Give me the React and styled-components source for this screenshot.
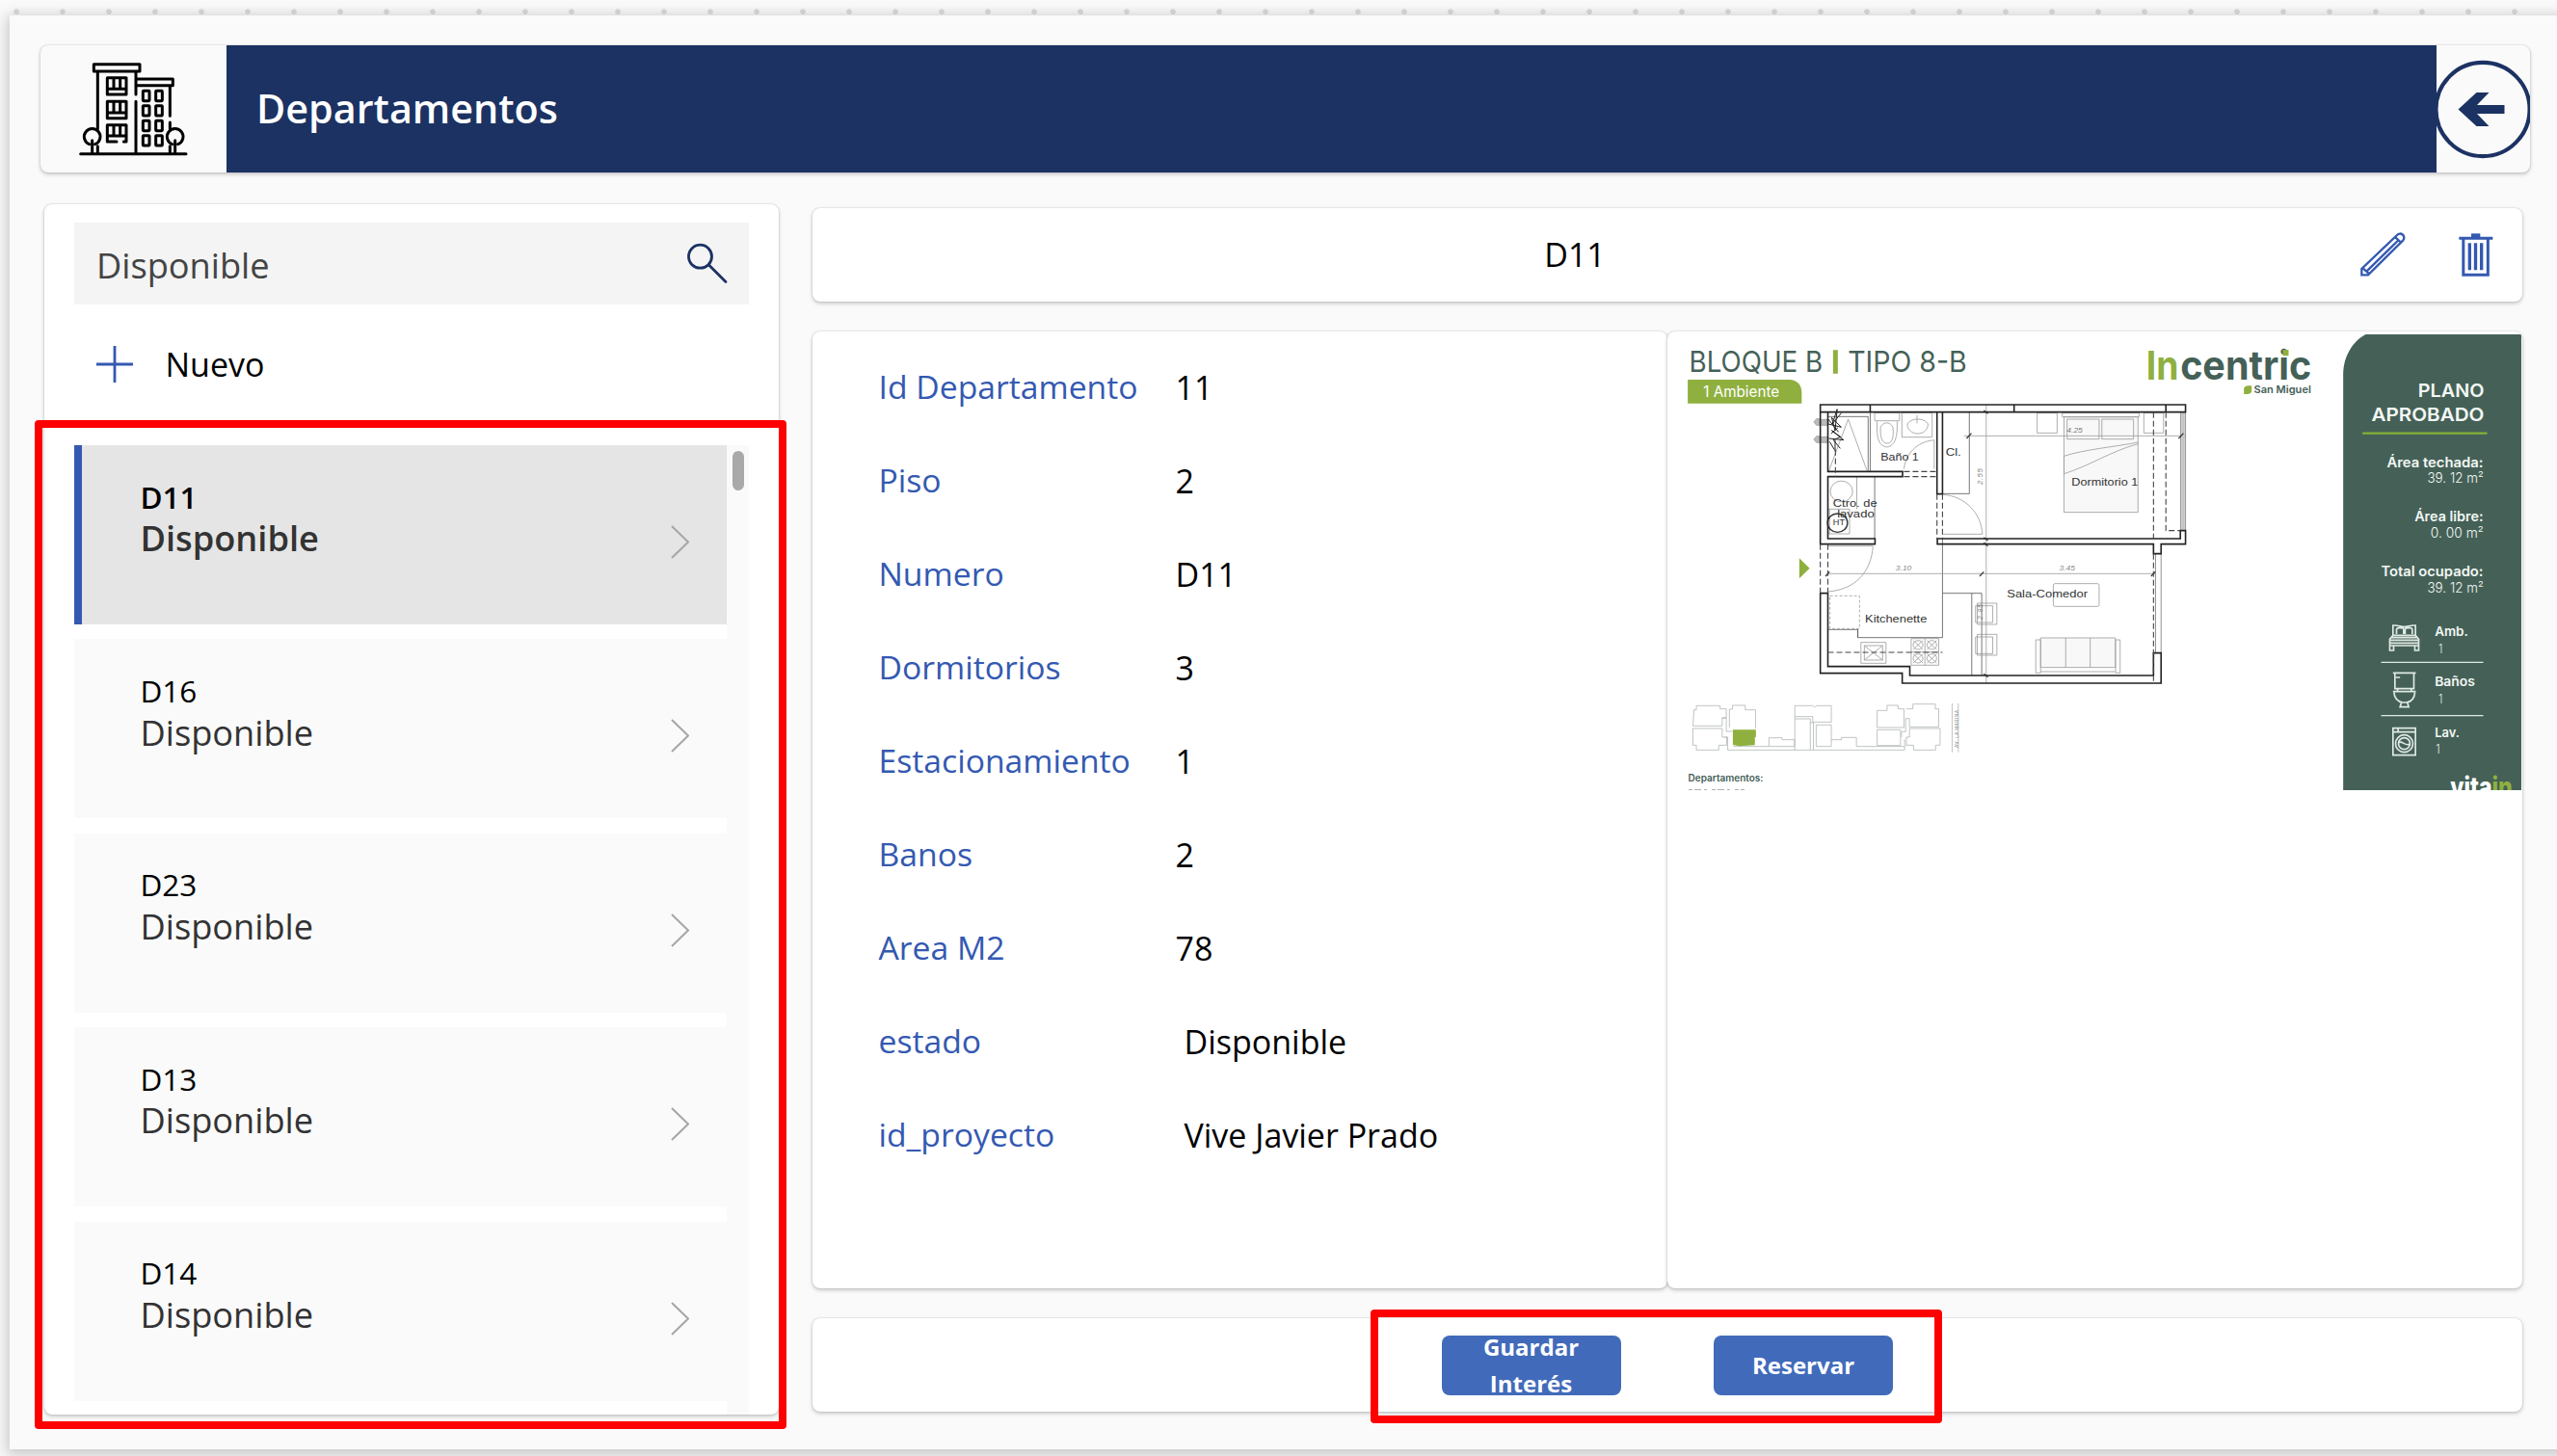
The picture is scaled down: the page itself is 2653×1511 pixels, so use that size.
import React from "react";
import styled, { createGlobalStyle, css } from "styled-components";

const GlobalStyle = createGlobalStyle`
  *, *::before, *::after { box-sizing: border-box; }
  body { margin: 0; background: #fafafa; overflow: hidden; }
`;

const navy = "#1c3263";
const blue = "#3459b1";
const deepGreen = "#456157";
const lime = "#8fb03e";

const Page = styled.div`
  width: 2653px;
  height: 1511px;
  overflow: hidden;
  position: relative;
  padding: 16px 0 0 10px;
  font-family: "Open Sans", "Noto Sans", sans-serif;
  font-size: 34px;
  color: #000;
  background: #fafafa radial-gradient(circle at 17px 12px, #dcdcdc 2.4px, transparent 3.2px) 0 0 / 48px 48px;
`;

const Canvas = styled.main`
  width: 2660px;
  height: 1488px;
  padding: 31px 0 0 32px;
  background: #fafafa;
  box-shadow: 0 3px 14px 3px rgba(0, 0, 0, 0.2);
`;

const card = css`
  background: #fff;
  border-radius: 8px;
  box-shadow: 0 0 2px rgba(0, 0, 0, 0.2), 0 2px 4px rgba(0, 0, 0, 0.2);
`;

const Header = styled.header`
  ${card}
  background: #fafafa;
  display: flex;
  width: 2582.5px;
  height: 132px;
  overflow: hidden;
`;

const LogoBox = styled.div`
  width: 193px;
  padding: 8px 0 0 28px;
`;

const TitleBar = styled.h1`
  flex: 1;
  margin: 0;
  padding-left: 31px;
  background: ${navy};
  color: #fff;
  font-size: 41.3px;
  font-weight: 600;
  line-height: 131px;
`;

const BackButton = styled.button`
  width: 97px;
  padding: 0;
  border: 0;
  background: none;
  display: flex;
  align-items: center;
  justify-content: center;
  overflow: hidden;
  svg { flex: none; }
`;

const Body = styled.div`
  display: flex;
  align-items: flex-start;
  gap: 35px;
  padding: 33px 0 0 4px;
`;

const Sidebar = styled.aside`
  ${card}
  width: 762px;
  height: 1256px;
  padding: 19px 31px 0 30.5px;
  display: flex;
  flex-direction: column;
`;

const SearchField = styled.div`
  height: 85px;
  padding: 2px 22px 0 23.5px;
  display: flex;
  align-items: center;
  justify-content: space-between;
  background: #f4f4f4;
  color: #444;
  font-size: 36.2px;
  svg { margin-bottom: 3px; }
`;

const NewButton = styled.div`
  height: 146px;
  padding: 0 0 22px 23px;
  display: flex;
  align-items: center;
  gap: 34px;
`;

const Gallery = styled.div`
  flex: 1;
  display: flex;
  justify-content: space-between;
  background: #fafafa;
`;

const Items = styled.ul`
  width: 677.5px;
  height: 1006px;
  margin: 0;
  padding: 0;
  list-style: none;
  display: flex;
  flex-direction: column;
  gap: 15.4px;
  background: #fff;
`;

const Item = styled.li`
  height: 186px;
  padding: 31.5px 39.5px 0 ${(p) => (p.$selected ? 61 : 69)}px;
  display: flex;
  justify-content: space-between;
  background: ${(p) => (p.$selected ? "#e5e5e5" : "#fafafa")};
  border-left: ${(p) => (p.$selected ? `8px solid ${blue}` : "0")};
  font-weight: ${(p) => (p.$selected ? 600 : 400)};
  line-height: 43.7px;
  svg { margin-top: 51.5px; }
`;

const ItemTitle = styled.div`
  font-size: 31.5px;
`;

const ItemState = styled.div`
  font-size: 36.2px;
  color: #333;
`;

const ScrollTrack = styled.div`
  width: 23px;
  padding: 5.5px 0 0 6px;
`;

const ScrollThumb = styled.div`
  width: 11.5px;
  height: 41px;
  border-radius: 6px;
  background: #a9a9a9;
`;

const Detail = styled.section`
  width: 1774px;
  padding-top: 4px;
  display: flex;
  flex-direction: column;
`;

const DetailHeader = styled.div`
  ${card}
  height: 97px;
  padding-right: 30px;
  display: flex;
  align-items: center;
`;

const DetailTitle = styled.div`
  flex: 1;
  padding: 0 24px 1px 0;
  text-align: center;
`;

const Actions = styled.div`
  display: flex;
  gap: 55px;
  padding-bottom: 1px;
`;

const DetailBody = styled.div`
  display: flex;
  margin: 31px 0;
`;

const FormCard = styled.div`
  ${card}
  width: 887px;
  height: 993px;
  padding: 9px 0 0 68.5px;
`;

const PictureCard = styled(FormCard)`
  padding: 3px 0 0;
  overflow: hidden;
`;

const Field = styled.div`
  height: 97px;
  display: flex;
  line-height: 97px;
`;

const FieldLabel = styled.div`
  width: ${(p) => (p.$indent ? 317 : 308)}px;
  color: ${blue};
  font-size: 33.7px;
`;

const FieldValue = styled.div`
  padding-top: 0.5px;
`;

const Footer = styled.div`
  ${card}
  height: 97px;
  padding: 17.5px 0 0 652.5px;
  display: flex;
  gap: 96.5px;
`;

const ActionButton = styled.button`
  width: 186px;
  height: 62px;
  padding: 1px 20px 0;
  border: 0;
  border-radius: 8px;
  overflow: hidden;
  display: flex;
  align-items: center;
  justify-content: center;
  background: #416bba;
  color: #fff;
  font: 700 24px/37.7px "Open Sans", sans-serif;
`;

const Highlight = styled.div`
  position: absolute;
  border: 8px solid #f00;
  border-radius: 4px;
  left: ${(p) => p.$x}px;
  top: ${(p) => p.$y}px;
  width: ${(p) => p.$w}px;
  height: ${(p) => p.$h}px;
`;

const BuildingIcon = () => {
  const flat = [[235, 118], [275, 118], [235, 164], [275, 164], [235, 211], [275, 211], [235, 257], [275, 257]];
  return (
    <svg width="135" height="115" viewBox="0 0 405 345" fill="none" stroke="#000" strokeWidth="9" strokeLinecap="round" strokeLinejoin="round">
      <path d="M41 314H369M94 58V236M94 290V312M213 151V312M213 58V129M319 104V196M319 216V236M319 290V312" />
      <rect x="82" y="35" width="143" height="22" />
      <path d="M217 81H328V101H217" />
      {[77, 151].map((y) => (
        <path key={y} d={`M124 ${y}H183V${y + 52}H124ZM124 ${y + 35}H183M144 ${y}V${y + 33}M164 ${y}V${y + 33}`} />
      ))}
      <path d="M153 276H124V224H183V276H175M124 258H183M144 224V257M164 224V257" />
      {flat.map(([x, y]) => (
        <rect key={`${x}-${y}`} x={x} y={y} width="20" height="31" rx="2" />
      ))}
      <path d="M68 284A25 25 0 1 1 86 284M326 284A25 25 0 1 1 344 284M77 272V312M335 272V312" />
    </svg>
  );
};

const BackIcon = () => (
  <svg width="103" height="103" viewBox="0 0 103 103">
    <circle cx="51" cy="51.5" r="48.6" fill="none" stroke={navy} strokeWidth="4.2" />
    <path fill={navy} d="M25.500 51.5L44.500 34H57.500L45 47H73.500V56H45L57.500 69H44.500Z" />
  </svg>
);

const SearchIcon = () => (
  <svg width="44" height="44" viewBox="0 0 44 44" fill="none" stroke={navy} strokeWidth="2.8" strokeLinecap="round">
    <circle cx="15.5" cy="15.2" r="12" />
    <path d="M24.5 24L42 41.5" />
  </svg>
);

const PlusIcon = () => (
  <svg width="38" height="38" viewBox="0 0 38 38" stroke={blue} strokeWidth="2.8">
    <path d="M0 19H38M19 0V38" />
  </svg>
);

const Chevron = () => (
  <svg width="19" height="35" viewBox="0 0 19 35" fill="none" stroke="#a6a6a6" strokeWidth="2">
    <path d="M1 1L18 17.5L1 34" />
  </svg>
);

const PencilIcon = () => (
  <svg width="47" height="46" viewBox="0 0 141 138" fill="none" stroke={blue} strokeWidth="7">
    <path d="M4 133V114L114 9A11.5 11.5 0 0 1 133 25L24 133ZM20 121L116 27M8 112L28 130M107 14L127 33" />
  </svg>
);

const TrashIcon = () => (
  <svg width="36" height="46" viewBox="0 0 108 138" fill="none" stroke={blue}>
    <path strokeWidth="9" d="M1 19H106M14.5 19V132.500H91V19" />
    <path strokeWidth="10" d="M34 34V118M52.500 34V118M71 34V118" />
    <path fill={blue} stroke="none" d="M39 4H67V17H39Z" />
  </svg>
);

/* Plan coordinates are 2.8 units per pixel across and 3 units per pixel down. */
const PlanText = ({ x, y, w, size, children, ...rest }) => (
  <text
    x={x / 2.8 - 1}
    y={y / 3 - 7}
    textLength={w / 2.8}
    lengthAdjust="spacingAndGlyphs"
    fontSize={size}
    fill="#333"
    fontFamily="Liberation Sans, Arial, sans-serif"
    {...rest}
  >
    {children}
  </text>
);

const PanelText = ({ x, y, w, size, weight = 600, fill = "#f2f7f4", children }) => (
  <text x={x} y={y} textLength={w} lengthAdjust="spacingAndGlyphs" fontSize={size} fontWeight={weight} fill={fill}>
    {children}
  </text>
);

const Walls = () => (
  <g stroke="#222" strokeWidth="1.6">
    <path d="M447 240H1508V263H447ZM592 240V263M1010 240V263M1451 240V263" />
    <path d="M447 263V674H606V657H469V464H686V448H469V263" />
    <path d="M786 263V518H802V263" />
    <path d="M1493 632H1508V674H1437V704H1415V674H787V657H1493Z" />
    <path d="M469 827H447V1076H685V1107H1437V1013H1415V1083H707V1055H469Z" />
    <path strokeDasharray="6 3" strokeWidth="1.1" stroke="#444" d="M447 674V827M469 674V827M690 448H786M690 464H786M786 518V657M802 518V657M1415 263V657M1451 263V632H1493M469 1011H802M1415 704V1107M491 380V464" />
  </g>
);

const Furniture = () => (
  <g stroke="#999" strokeWidth="0.8">
    <path fill="#f8f8f8" stroke="none" d="M1155 278H1370V575H1155ZM1087 966H1304V1058H1087Z" />
    <path stroke="#555" d="M586 277V446M592 263V448M469 277H586M802 517H880V263M605 464V657M802 657V965H556V940H469M802 827H916V1083M887 827V1083M556 940V965" />
    <path d="M472 446L528 285L583 446M864 337H1508M929 240V1107M469 766H1420" />
    <path d="M605 265H677V290H605ZM612 292C610 340 615 368 640 372C665 368 672 340 670 292M622 310C620 350 630 360 641 360C652 360 662 350 658 310C650 292 630 292 622 310ZM684 265H772V341H684ZM700 300C700 340 760 340 760 300C750 280 710 280 700 300ZM728 272V298" />
    <path d="M690 440C695 395 725 355 778 350V440M804 520C870 525 915 580 918 643H804M470 680H600M600 680C595 760 550 815 470 822" />
    <path d="M1077 266H1135V328H1077ZM1387 266H1444V328H1387ZM1155 575V278H1370V575ZM1150 266H1373V278H1150ZM1164 285H1257V347H1164ZM1265 285H1357V347H1265ZM1155 400C1210 380 1310 370 1370 357M1155 455C1230 430 1290 385 1370 362M1155 400V455" />
    <path stroke="#c4c4c4" strokeWidth="3.500" d="M1501 263V632" />
    <path d="M1508 263V632M1494 263V632M1421 704V1013M1437 704V1013" stroke="#777" />
    <path d="M474 565V642M476 510A32 32 0 0 1 541 510A32 32 0 0 1 476 510M553 464V565M470 565H532V642H470" />
    <circle cx="497" cy="608" r="29" stroke="#333" strokeWidth="1.4" />
    <path d="M475 835H561V937H475Z" strokeDasharray="3 2" />
    <path d="M565 980H638V1045H565ZM575 990H628V1035H575ZM575 990L628 1035M628 990L575 1035M711 968H791V1051H711ZM751 968V1051M711 1010H791" />
    {[[731, 988], [771, 988], [731, 1030], [771, 1030]].map(([x, y]) => (
      <path key={`${x}-${y}`} d={`M${x - 14} ${y}A14 14 0 0 1 ${x + 14} ${y}A14 14 0 0 1 ${x - 14} ${y}M${x - 14} ${y - 14}L${x + 14} ${y + 14}M${x + 14} ${y - 14}L${x - 14} ${y + 14}`} />
    ))}
    <path d="M903 858H960V924H903ZM898 866H948V918H898ZM903 955H960V1020H903ZM898 963H948V1015H898Z" />
    <rect x="1124" y="797" width="133" height="71" rx="5" />
    <path d="M1073 972H1087V1075H1073ZM1305 972H1318V1075H1305ZM1087 966H1304V1058H1087ZM1160 966V1058M1231 966V1058M1087 1071H1304" />
    <path stroke="#333" strokeWidth="1.2" d="M462 774L474 760M910 774L922 760M1408 774L1420 760M872 345L886 329M1488 345L1502 329M922 258L934 268M922 653L934 663M922 670L934 680M922 1078L934 1088" />
    <path stroke="#222" strokeWidth="1" d="M470 300L508 310L480 280L490 320L496 254L482 300L508 266M472 345L515 350L480 320L506 340L485 350L505 376M490 350V385M478 330L498 312M474 355L488 380M470 285L500 325" />
    <path fill="#bbb" d="M428 294L436 284H445V304H436ZM428 348L436 338H445V358H436ZM450 286H470V304H450ZM450 340H470V358H450Z" />
  </g>
);

const MiniMap = () => (
  <g transform="translate(-1 343) scale(.35714 .33333)" fill="none" stroke="#aab2ae" strokeWidth="2.2">
    <path d="M87 127H156V137H174V165H162V190H77L80 140H87ZM77 198H162V225H175V250H152V265H87V250H77Z" />
    <path d="M183 195V138H192V126H229V140H259V198M162 165H174V207H192M170 225H178V265H692V232M194 254H298V227H336V233H372V254M298 254H372" />
    <path d="M373 265V127H425L430 132L436 127H479V178H425V161H373M373 168H418V265M427 180V265M435 187H479V254H435ZM479 233H508V226H552V254H692M418 180H427" />
    <path d="M612 195V142H641V126H673V137H690V195ZM612 202H680V251H612ZM697 137H716V122H781V137H791V193H706V167H695V208H683V225M706 198H795V250H782V265H718V250H697V225H706Z" />
    <path d="M830 120V272M848 120V272" />
    <path fill={lime} stroke="none" d="M193 202H260V225H257V250L212 253L193 249Z" />
  </g>
);

const SidePanel = () => (
  <g transform="translate(469.500 -17) scale(.33333)" fontFamily="Inter, Open Sans, sans-serif">
    <path fill={deepGreen} d="M695 1475V175C695 120 725 72 765 51H1252V1475Z" />
    <PanelText x={82} y={193} w={101} size={124} weight={700} fill={lime}>In</PanelText>
    <PanelText x={188} y={193} w={408} size={124} weight={700} fill={deepGreen}>centric</PanelText>
    <path fill={lime} d="M507 99H525V118H507ZM386 237V220Q388 211 400 211H410V228Q408 237 396 237Z" />
    <PanelText x={417} y={233} w={178} size={32} fill={deepGreen}>San Miguel</PanelText>
    <PanelText x={928} y={246} w={206} size={58}>PLANO</PanelText>
    <PanelText x={783} y={320} w={351} size={58}>APROBADO</PanelText>
    <path stroke="#83b136" strokeWidth="7" d="M755 359H1143" />
    <PanelText x={831} y={464} w={300} size={42}>Área techada:</PanelText>
    <PanelText x={957} y={514} w={175} size={43} weight={300}>39. 12 m²</PanelText>
    <PanelText x={917} y={633} w={214} size={42}>Área libre:</PanelText>
    <PanelText x={967} y={683} w={165} size={43} weight={300}>0. 00 m²</PanelText>
    <PanelText x={813} y={804} w={318} size={42}>Total ocupado:</PanelText>
    <PanelText x={957} y={855} w={175} size={43} weight={300}>39. 12 m²</PanelText>
    <PanelText x={980} y={990} w={104} size={39}>Amb.</PanelText>
    <PanelText x={992} y={1043} w={12} size={39} weight={300}>1</PanelText>
    <PanelText x={980} y={1145} w={125} size={39}>Baños</PanelText>
    <PanelText x={992} y={1199} w={12} size={39} weight={300}>1</PanelText>
    <PanelText x={980} y={1305} w={77} size={39}>Lav.</PanelText>
    <PanelText x={984} y={1356} w={12} size={39} weight={300}>1</PanelText>
    <g fill="none" stroke="#dfe9e4" strokeWidth="5">
      <path strokeWidth="3.500" d="M813 1072H1131M813 1238H1131" />
      <path d="M850 990V957H858L885 962L912 957H920V990M861 984V970Q861 965 868 965H876Q883 965 883 970V984M888 984V970Q888 965 895 965H903Q910 965 910 970V984M850 988H920L930 1000V1020H840V1000ZM840 1003H930M840 1012H930M840 1020V1035H852V1022M930 1020V1035H918V1022M846 995H924" />
      <path d="M850 1105H921M856 1106V1154H915V1106M859 1119H872M850 1163H921M864 1155V1162M907 1155V1162M853 1166C855 1185 866 1195 880 1197H892C906 1195 917 1185 918 1166M876 1198L872 1211H899L895 1198" />
      <path d="M850 1277H920V1361H850ZM850 1289H920M866 1277V1289" />
      <circle cx="885" cy="1325" r="27" />
      <circle cx="885" cy="1325" r="18" />
      <path d="M868 1322C878 1314 890 1336 903 1326" />
    </g>
    <PanelText x={1028} y={1491} w={130} size={84} weight={800} fill="#fff">vita</PanelText>
    <PanelText x={1158} y={1491} w={64} size={84} weight={800} fill={lime}>in</PanelText>
  </g>
);

const ScaledLines = styled.g`
  fill: none;
  path, circle, rect { vector-effect: non-scaling-stroke; }
`;

const FloorPlan = () => (
  <svg width="886" height="473" viewBox="0 0 886 473" display="block">
    <PlanText x={66} y={138} w={388} size={30} fill={deepGreen} fontFamily="Inter, sans-serif">BLOQUE B</PlanText>
    <PlanText x={527} y={138} w={346} size={30} fill={deepGreen} fontFamily="Inter, sans-serif">TIPO 8-B</PlanText>
    <g transform="translate(-1 -7) scale(.35714 .33333)" fill={lime}>
      <path d="M484 70H498V143H484ZM62 162H360Q393 166 393 205V236H62ZM386 718L416 749L386 781Z" />
    </g>
    <PlanText x={107} y={215} w={221} size={15.5} fill="#fff" fontFamily="Inter, sans-serif">1 Ambiente</PlanText>
    <ScaledLines transform="translate(-1 -7) scale(.35714 .33333)">
      <Furniture />
      <Walls />
    </ScaledLines>
    <PlanText x={622} y={414} w={111} size={10.5}>Baño 1</PlanText>
    <PlanText x={811} y={400} w={45} size={10.5}>Cl.</PlanText>
    <PlanText x={484} y={557} w={128} size={10.5}>Ctro. de</PlanText>
    <PlanText x={496} y={590} w={108} size={10.5}>lavado</PlanText>
    <PlanText x={484} y={616} w={34} size={9}>HT</PlanText>
    <PlanText x={1177} y={492} w={193} size={10.5}>Dormitorio 1</PlanText>
    <PlanText x={989} y={839} w={235} size={10.5}>Sala-Comedor</PlanText>
    <PlanText x={577} y={919} w={180} size={10.5}>Kitchenette</PlanText>
    <PlanText x={666} y={757} w={46} size={8} fill="#888" fontStyle="italic">3.10</PlanText>
    <PlanText x={1141} y={757} w={46} size={8} fill="#888" fontStyle="italic">3.45</PlanText>
    <PlanText x={1163} y={327} w={46} size={7.5} fill="#777" fontStyle="italic">4.25</PlanText>
    <text transform="translate(327 156) rotate(-90)" fontFamily="Liberation Sans, sans-serif" fontSize="8" fontStyle="italic" fill="#888" textLength="17">2.55</text>
    <text transform="translate(327 296) rotate(-90)" fontFamily="Liberation Sans, sans-serif" fontSize="7" fontStyle="italic" fill="#777" textLength="16">2.85</text>
    <MiniMap />
    <text transform="translate(302 429) rotate(-90)" fontFamily="Liberation Sans, sans-serif" fontSize="5" fill="#7d8984" textLength="39">AV. LA MARINA</text>
    <text x="21.5" y="464" fontFamily="Inter, sans-serif" fontSize="10" fontWeight="600" fill={deepGreen} textLength="78" lengthAdjust="spacingAndGlyphs">Departamentos:</text>
    <path stroke="#a9b3ae" strokeWidth="1" strokeDasharray="4 2 7 3 3 5" d="M22 472.500H80" />
    <SidePanel />
  </svg>
);

const departments = ["D11", "D16", "D23", "D13", "D14"];

const fields = [
  ["Id Departamento", "11"],
  ["Piso", "2"],
  ["Numero", "D11"],
  ["Dormitorios", "3"],
  ["Estacionamiento", "1"],
  ["Banos", "2"],
  ["Area M2", "78"],
  ["estado", "Disponible", true],
  ["id_proyecto", "Vive Javier Prado", true],
];

export default function App() {
  return (
    <Page>
      <GlobalStyle />
      <Canvas>
        <Header>
          <LogoBox><BuildingIcon /></LogoBox>
          <TitleBar>Departamentos</TitleBar>
          <BackButton aria-label="Volver"><BackIcon /></BackButton>
        </Header>
        <Body>
          <Sidebar>
            <SearchField>
              <span>Disponible</span>
              <SearchIcon />
            </SearchField>
            <NewButton>
              <PlusIcon />
              <span>Nuevo</span>
            </NewButton>
            <Gallery>
              <Items>
                {departments.map((name, i) => (
                  <Item key={name} $selected={i === 0}>
                    <div>
                      <ItemTitle>{name}</ItemTitle>
                      <ItemState>Disponible</ItemState>
                    </div>
                    <Chevron />
                  </Item>
                ))}
              </Items>
              <ScrollTrack><ScrollThumb /></ScrollTrack>
            </Gallery>
          </Sidebar>
          <Detail>
            <DetailHeader>
              <DetailTitle>D11</DetailTitle>
              <Actions>
                <PencilIcon />
                <TrashIcon />
              </Actions>
            </DetailHeader>
            <DetailBody>
              <FormCard>
                {fields.map(([label, value, indent]) => (
                  <Field key={label}>
                    <FieldLabel $indent={indent}>{label}</FieldLabel>
                    <FieldValue>{value}</FieldValue>
                  </Field>
                ))}
              </FormCard>
              <PictureCard><FloorPlan /></PictureCard>
            </DetailBody>
            <Footer>
              <ActionButton>Guardar Interés</ActionButton>
              <ActionButton>Reservar</ActionButton>
            </Footer>
          </Detail>
        </Body>
      </Canvas>
      <Highlight $x={35.5} $y={436} $w={780} $h={1047} />
      <Highlight $x={1421.5} $y={1358.5} $w={593} $h={118} />
    </Page>
  );
}
